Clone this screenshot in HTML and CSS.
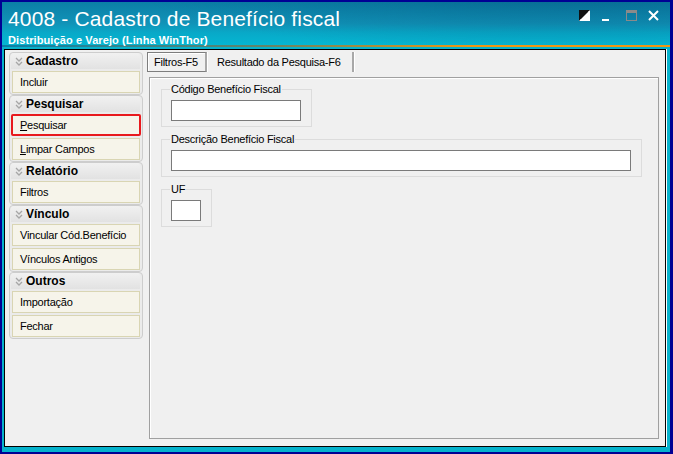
FILE: index.html
```html
<!DOCTYPE html>
<html lang="pt-BR">
<head>
    <meta charset="UTF-8">
    <title>4008 - Cadastro de Benefício fiscal</title>
    <link rel="stylesheet" href="styles.css">
</head>
<body>
    <div class="window">
        <div class="titlebar">
            <div class="titles">
                <div class="title">4008 - Cadastro de Benefício fiscal</div>
                <div class="subtitle">Distribuição e Varejo (Linha WinThor)</div>
            </div>
            <div class="controls">
                <svg class="ctl" width="11" height="11" viewBox="0 0 11 11">
                    <rect x="0" y="0" width="11" height="11" fill="#fff"/>
                    <polygon points="0,0 11,0 0,11" fill="#111"/>
                    <polyline points="1,10 10,10 10,1" fill="none" stroke="#fff" stroke-width="1"/>
                </svg>
                <svg class="ctl" width="8" height="11" viewBox="0 0 8 11">
                    <rect x="0" y="9" width="7" height="2" fill="#fff"/>
                </svg>
                <svg class="ctl" width="11" height="11" viewBox="0 0 11 11">
                    <rect x="0.5" y="0.5" width="10" height="10" fill="none" stroke="#8a8a8a"/>
                    <rect x="0" y="0" width="11" height="3" fill="#8a8a8a"/>
                </svg>
                <svg class="ctl" width="11" height="11" viewBox="0 0 11 11">
                    <path d="M1 1 L10 10 M10 1 L1 10" stroke="#fff" stroke-width="2"/>
                </svg>
            </div>
        </div>
        <div class="client">
            <aside class="sidebar">
                <div class="group">
                    <div class="group-head"><svg class="chev" width="8" height="9" viewBox="0 0 8 9"><polyline points="1,1 4,4 7,1" /><polyline points="1,5 4,8 7,5" /></svg>Cadastro</div>
                    <div class="item">Incluir</div>
                </div>
                <div class="group">
                    <div class="group-head"><svg class="chev" width="8" height="9" viewBox="0 0 8 9"><polyline points="1,1 4,4 7,1" /><polyline points="1,5 4,8 7,5" /></svg>Pesquisar</div>
                    <div class="item marked"><u>P</u>esquisar</div>
                    <div class="item"><u>L</u>impar Campos</div>
                </div>
                <div class="group">
                    <div class="group-head"><svg class="chev" width="8" height="9" viewBox="0 0 8 9"><polyline points="1,1 4,4 7,1" /><polyline points="1,5 4,8 7,5" /></svg>Relatório</div>
                    <div class="item">Filtros</div>
                </div>
                <div class="group">
                    <div class="group-head"><svg class="chev" width="8" height="9" viewBox="0 0 8 9"><polyline points="1,1 4,4 7,1" /><polyline points="1,5 4,8 7,5" /></svg>Vínculo</div>
                    <div class="item">Vincular Cód.Benefício</div>
                    <div class="item">Vínculos Antigos</div>
                </div>
                <div class="group">
                    <div class="group-head"><svg class="chev" width="8" height="9" viewBox="0 0 8 9"><polyline points="1,1 4,4 7,1" /><polyline points="1,5 4,8 7,5" /></svg>Outros</div>
                    <div class="item">Importação</div>
                    <div class="item">Fechar</div>
                </div>
            </aside>
            <main class="content">
                <div class="tabs">
                    <div class="tab active">Filtros-F5</div>
                    <div class="tab">Resultado da Pesquisa-F6</div>
                </div>
                <div class="page">
                    <fieldset class="box box-code">
                        <legend>Código Benefício Fiscal</legend>
                        <input type="text" class="field field-code">
                    </fieldset>
                    <fieldset class="box box-desc">
                        <legend>Descrição Benefício Fiscal</legend>
                        <input type="text" class="field field-desc">
                    </fieldset>
                    <fieldset class="box box-uf">
                        <legend>UF</legend>
                        <input type="text" class="field field-uf">
                    </fieldset>
                </div>
            </main>
        </div>
    </div>
</body>
</html>
```

FILE: styles.css
```css
body {
    margin: 0;
    background: #000094;
    font-family: "Liberation Sans", Arial, sans-serif;
    font-size: 11px;
    letter-spacing: -0.25px;
    color: #000;
    width: 673px;
    height: 454px;
    overflow: hidden;
}

.window {
    margin: 2px 3px 2px 2px;
    width: 668px;
    height: 450px;
    box-sizing: border-box;
    padding: 0 4px 5px 2px;
    background: #06b2cc;
    display: flex;
    flex-direction: column;
}

.titlebar {
    height: 43px;
    margin: 0 -4px 0 -2px;
    padding: 0 11px 0 6px;
    display: flex;
    justify-content: space-between;
    background:
        radial-gradient(ellipse 420px 60px at 560px -10px, rgba(0, 70, 110, 0.35), transparent),
        linear-gradient(#0b7fa6 0%, #1193b8 50%, #08a9c8 72%, #05b6d2 100%);
    border-bottom: 2px solid;
    border-image: linear-gradient(to right, rgba(238, 150, 20, 0) 0%, rgba(238, 150, 20, 0.4) 40%, #ee9614 70%) 1;
    color: #fff;
    letter-spacing: 0;
}

.titles {
    padding-top: 5px;
}

.title {
    font-size: 21px;
    line-height: 24px;
    letter-spacing: 0.15px;
}

.subtitle {
    font-weight: bold;
    font-size: 11px;
    line-height: 13px;
    margin-top: 3px;
    letter-spacing: 0.1px;
}

.controls {
    display: flex;
    align-items: flex-start;
    padding-top: 8px;
    gap: 12px;
}

.controls .ctl {
    display: block;
}

.controls .ctl:nth-child(3) {
    margin-left: 4px;
}

.controls .ctl:nth-child(4) {
    margin-left: -1px;
}

.client {
    flex: 1;
    margin-top: 2px;
    border: 1px solid #000;
    background: #f0f0f0;
    box-shadow: 1px 0 0 #fff;
    display: flex;
    padding: 2px 0 0 4px;
}

.sidebar {
    width: 134px;
}

.group {
    border: 1px solid #cdcdcd;
    border-radius: 4px;
    background: #ebebeb;
    padding: 0 2px 1px 1px;
}

.group-head {
    height: 16px;
    display: flex;
    align-items: center;
    font-weight: bold;
    font-size: 12px;
    letter-spacing: 0;
    padding-left: 4px;
    background: linear-gradient(#f1f1f1, #e2e2e2);
    border-radius: 3px 3px 0 0;
}

.chev {
    fill: none;
    stroke: #a6a6a6;
    stroke-width: 1.3;
    margin-right: 3px;
}

.item {
    height: 22px;
    box-sizing: border-box;
    margin-top: 2px;
    margin-left: 1px;
    border: 1px solid #d9d5b3;
    background: #f6f4ea;
    padding-left: 7px;
    display: flex;
    align-items: center;
}

.item u {
    text-decoration: underline;
}

.item.marked {
    border: 2px solid #e8191d;
    border-radius: 2px;
    margin-left: 0;
    margin-right: -1px;
    padding-left: 7px;
}

.content {
    margin-left: 4px;
    width: 514px;
}

.tabs {
    display: flex;
    height: 20px;
}

.tab {
    padding: 0 11px 0 10px;
    display: flex;
    align-items: center;
    border-right: 2px solid #a8a8a8;
    box-shadow: 1px 0 0 #fff;
}

.tab.active {
    padding: 0 7px 0 6px;
    border: 1px solid #7d7d7d;
    border-right: 2px solid #a8a8a8;
    box-shadow: inset 1px 1px 0 #fff, 1px 0 0 #fff;
}

.page {
    margin: 5px 0 0 2px;
    width: 510px;
    height: 362px;
    box-sizing: border-box;
    border: 1px solid #a0a0a0;
    box-shadow: inset 1px 1px 0 #fff;
    padding: 5px 0 0 11px;
}

.box {
    margin: 0 0 6px 0;
    border: 1px solid #dcdcdc;
    padding: 5px 10px 5px 9px;
    box-sizing: border-box;
}

.box legend {
    padding: 0 1px;
    margin-left: -1px;
    line-height: 12px;
}

.box-code {
    width: 150px;
}

.box-desc {
    width: 480px;
}

.box-uf {
    width: 50px;
}

.field {
    display: block;
    height: 21px;
    box-sizing: border-box;
    border: 1px solid #7a7a7a;
    background: #fff;
    margin: 0;
    padding: 0;
    font: inherit;
}

.field-code {
    width: 130px;
}

.field-desc {
    width: 460px;
}

.field-uf {
    width: 30px;
}
```
